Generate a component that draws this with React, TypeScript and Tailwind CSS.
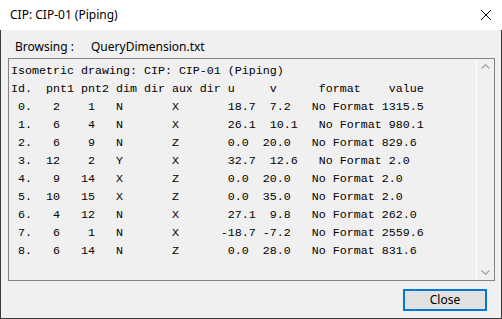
const lines = [
  'Isometric drawing: CIP: CIP-01 (Piping)',
  'Id.  pnt1 pnt2 dim dir aux dir u     v      format    value',
  ' 0.   2    1   N       X       18.7  7.2   No Format 1315.5',
  ' 1.   6    4   N       X       26.1  10.1   No Format 980.1',
  ' 2.   6    9   N       Z       0.0  20.0   No Format 829.6',
  ' 3.  12    2   Y       X       32.7  12.6   No Format 2.0',
  ' 4.   9   14   X       Z       0.0  20.0   No Format 2.0',
  ' 5.  10   15   X       Z       0.0  35.0   No Format 2.0',
  ' 6.   4   12   N       X       27.1  9.8   No Format 262.0',
  ' 7.   6    1   N       X      -18.7 -7.2   No Format 2559.6',
  ' 8.   6   14   N       Z       0.0  28.0   No Format 831.6',
]

const uiFont = { fontFamily: '"Segoe UI", "Noto Sans", sans-serif' }

function Chevron({ up }: { up: boolean }) {
  return (
    <svg width="9" height="5" viewBox="0 0 9 5" className="block">
      <path
        d={up ? 'M0.5 4.5 L4.5 0.8 L8.5 4.5' : 'M0.5 0.5 L4.5 4.2 L8.5 0.5'}
        fill="none"
        stroke="#a6a6a6"
        strokeWidth="1.4"
      />
    </svg>
  )
}

export default function App() {
  return (
    <div className="w-[502px] h-[319px] flex flex-col bg-[#f0f0f0] text-black" style={uiFont}>
      <div className="h-[30px] shrink-0 bg-white flex items-start justify-between pl-[10px] pr-[11px]">
        <span className="pt-[7px] text-[12px] leading-[16px]">CIP: CIP-01 (Piping)</span>
        <svg width="10" height="10" viewBox="0 0 10 10" className="mt-[10px]">
          <path d="M0 0 L10 10 M10 0 L0 10" stroke="#000" strokeWidth="1" />
        </svg>
      </div>

      <div className="flex-1 flex flex-col border-l border-r border-b border-[#3a3a3a]">
        <div className="h-[28px] shrink-0 flex items-start pt-[9px] pl-[14px] text-[12px] leading-[16px]">
          <span className="w-[76px]">Browsing :</span>
          <span>QueryDimension.txt</span>
        </div>

        <div className="ml-[7px] w-[487px] h-[223px] shrink-0 flex border border-[#828282]">
          <pre
            className="flex-1 pt-[3px] pl-[2px] text-[11.67px] leading-[18px] text-black whitespace-pre overflow-hidden"
            style={{ fontFamily: '"Liberation Mono", "Courier New", monospace' }}
          >
            {lines.join('\n')}
          </pre>
          <div className="w-[18px] shrink-0 border-l border-white flex flex-col items-center justify-between py-[5px]">
            <Chevron up />
            <Chevron up={false} />
          </div>
        </div>

        <div className="flex justify-end pt-[8px] pr-[14px]">
          <button className="w-[84px] h-[22px] border-2 border-[#0078d7] bg-[#e1e1e1] text-[12px] leading-[16px] text-black">
            Close
          </button>
        </div>
      </div>
    </div>
  )
}
